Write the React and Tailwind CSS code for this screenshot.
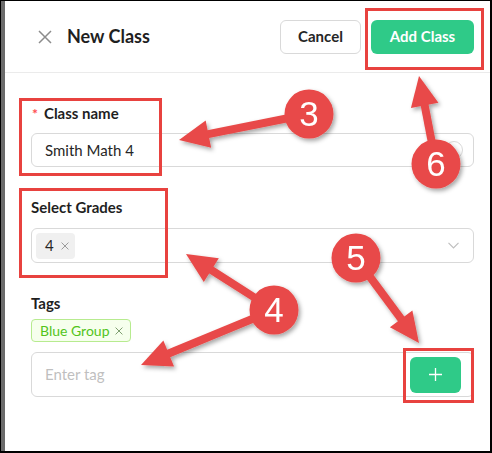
import React from "react";

const font = { fontFamily: "Lato, 'Open Sans', sans-serif" };

// arrow from circle centre to tip, head drawn as a triangle
function Arrow({ from, to, head = 30, wing = 14, width = 8 }) {
  const dx = to[0] - from[0];
  const dy = to[1] - from[1];
  const len = Math.hypot(dx, dy);
  const ux = dx / len;
  const uy = dy / len;
  const bx = to[0] - ux * head;
  const by = to[1] - uy * head;
  const px = -uy * wing;
  const py = ux * wing;
  return (
    <g>
      <line
        x1={from[0]}
        y1={from[1]}
        x2={bx + ux * 4}
        y2={by + uy * 4}
        stroke="#E84A48"
        strokeWidth={width}
      />
      <polygon
        points={`${to[0]},${to[1]} ${bx + px},${by + py} ${bx - px},${by - py}`}
        fill="#E84A48"
      />
    </g>
  );
}

function Badge({ cx, cy, n }) {
  return (
    <g>
      <circle cx={cx} cy={cy} r="24.5" fill="#E84A48" />
      <text
        x={cx}
        y={cy + 12}
        textAnchor="middle"
        fill="#fff"
        fontSize="35"
        fontFamily="'Liberation Sans', Arial, sans-serif"
      >
        {n}
      </text>
    </g>
  );
}

function Annotations() {
  const c3 = [308, 113];
  const c4 = [273, 309];
  const c5 = [355, 257];
  const c6 = [435, 163];
  return (
    <svg
      className="absolute inset-0 pointer-events-none"
      width="492"
      height="453"
      viewBox="0 0 492 453"
    >
      <defs>
        <filter id="sh" x="-20%" y="-20%" width="140%" height="140%">
          <feDropShadow dx="2" dy="2.5" stdDeviation="2" floodColor="#000" floodOpacity="0.35" />
        </filter>
      </defs>
      <g fill="none" stroke="#E8423F" strokeWidth="3">
        <rect x="365.5" y="8.5" width="116" height="59" />
        <rect x="19.5" y="98.5" width="140" height="75" />
        <rect x="19.5" y="188.5" width="146" height="87" />
        <rect x="403.5" y="348.5" width="68" height="52" />
      </g>
      <g filter="url(#sh)">
        <Arrow from={c3} to={[178, 139]} />
        <Badge cx={c3[0]} cy={c3[1]} n="3" />
      </g>
      <g filter="url(#sh)">
        <Arrow from={c6} to={[418, 75]} />
        <Badge cx={c6[0]} cy={c6[1]} n="6" />
      </g>
      <g filter="url(#sh)">
        <Arrow from={c5} to={[418, 342]} />
        <Badge cx={c5[0]} cy={c5[1]} n="5" />
      </g>
      <g filter="url(#sh)">
        <Arrow from={c4} to={[185, 253]} />
        <Arrow from={c4} to={[140, 364]} />
        <Badge cx={c4[0]} cy={c4[1]} n="4" />
      </g>
    </svg>
  );
}

function XIcon({ size = 14, className = "" }) {
  return (
    <svg width={size} height={size} viewBox="0 0 14 14" className={className}>
      <path d="M1 1L13 13M13 1L1 13" stroke="currentColor" strokeWidth="1.5" />
    </svg>
  );
}

export default function App() {
  return (
    <div
      className="relative w-[492px] h-[453px] flex bg-white border-t border-l border-r-2 border-b-2 border-black overflow-hidden"
      style={font}
    >
      <div className="w-[4px] bg-[#6b6b6b] shrink-0" />
      <div className="flex-1 flex flex-col">
        {/* header */}
        <div className="h-[72px] flex items-center border-b border-[#ebebeb] pl-[33px] pr-[16px] shrink-0">
          <XIcon size={14} className="text-[#8c8c8c]" />
          <h1 className="ml-[15px] text-[18px] font-bold text-[#1f1f1f] flex-1">New Class</h1>
          <button className="w-[81px] h-[34px] rounded-[6px] border border-[#d9d9d9] text-[15px] font-bold text-[#262626]">
            Cancel
          </button>
          <button className="ml-[10px] w-[103px] h-[34px] rounded-[6px] bg-[#2FCA88] text-[15px] font-bold text-white">
            Add Class
          </button>
        </div>

        {/* body */}
        <div className="pt-[29px] pl-[26px] pr-[16px] flex flex-col">
          <div className="h-[22px] flex items-center text-[15px] font-bold text-[#1f1f1f]">
            <span className="text-[#ff4d4f] mr-[6px] ml-[1px] text-[14px]">*</span>
            Class name
          </div>
          <div className="mt-[9px] h-[34px] rounded-[6px] border border-[#d9d9d9] flex items-center pl-[13px] pr-[10px]">
            <span className="flex-1 text-[15px] text-[#262626]">Smith Math 4</span>
            <span className="w-[18px] h-[18px] rounded-full border border-[#d9d9d9]" />
          </div>

          <div className="mt-[29px] h-[22px] flex items-center text-[15px] font-bold text-[#1f1f1f]">
            Select Grades
          </div>
          <div className="mt-[10px] h-[35px] rounded-[6px] border border-[#d9d9d9] flex items-center pl-[4px] pr-[14px]">
            <div className="h-[26px] w-[39px] rounded-[4px] bg-[#f0f0f0] flex items-center pl-[9px] gap-[7px]">
              <span className="text-[15px] text-[#262626]">4</span>
              <XIcon size={8} className="text-[#8c8c8c]" />
            </div>
            <div className="flex-1" />
            <svg width="11" height="7" viewBox="0 0 11 7">
              <path d="M0.5 0.8L5.5 5.8L10.5 0.8" fill="none" stroke="#bfbfbf" strokeWidth="1.2" />
            </svg>
          </div>

          <div className="mt-[29px] h-[22px] flex items-center text-[15px] font-bold text-[#1f1f1f]">
            Tags
          </div>
          <div className="mt-[5px] flex">
            <div className="h-[23px] pl-[8px] pr-[7px] rounded-[4px] border border-[#b7eb8f] bg-[#f6ffed] flex items-center gap-[5px] text-[14px] text-[#52c41a]">
              Blue Group
              <XIcon size={8} className="text-[#6b8f5a]" />
            </div>
          </div>
          <div className="mt-[10px] h-[45px] rounded-[6px] border border-[#d9d9d9] flex items-center pl-[13px] pr-[12px]">
            <span className="flex-1 text-[15px] text-[#bfbfbf]">Enter tag</span>
            <button className="w-[51px] h-[36px] rounded-[6px] bg-[#2FCA88] flex items-center justify-center">
              <svg width="13" height="13" viewBox="0 0 13 13">
                <path d="M6.5 0V13M0 6.5H13" stroke="#fff" strokeWidth="1.3" />
              </svg>
            </button>
          </div>
        </div>
      </div>
      <Annotations />
    </div>
  );
}
